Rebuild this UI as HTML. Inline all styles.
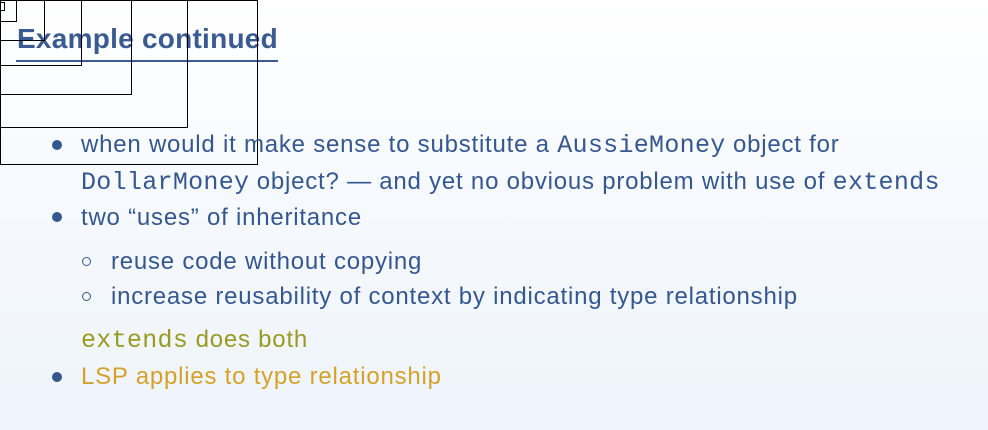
<!DOCTYPE html>
<html><head><meta charset="utf-8"><style>
html,body{margin:0;padding:0}
body{width:988px;height:430px;overflow:hidden;position:relative;background:linear-gradient(#ffffff,#f7fafe 40%,#eef4fb);font-family:"Liberation Sans",sans-serif;color:#35578f}
.r{position:absolute;left:0;top:0;border:1px solid #000;box-sizing:border-box}
.t{position:absolute;white-space:nowrap;font-size:24px;letter-spacing:0.78px;line-height:30px}
tt{font-family:"Liberation Mono",monospace;font-size:25px;letter-spacing:0.3px}
.b{position:absolute;width:10px;height:10px;border-radius:50%;background:#35578f}
.c{position:absolute;width:9px;height:9px;border-radius:50%;border:1.5px solid #35578f;box-sizing:border-box}
</style></head><body>
<div class="t" style="left:17px;top:24px;font-size:28px;letter-spacing:0.25px;font-weight:bold;color:#3a5b92">Example continued</div>
<div style="position:absolute;left:16px;top:60px;width:262px;height:2px;background:#3a5b92"></div>
<div class="r" style="width:5px;height:9px;top:2px"></div>
<div class="r" style="width:17px;height:22px"></div>
<div class="r" style="width:45px;height:41px"></div>
<div class="r" style="width:82px;height:66px"></div>
<div class="r" style="width:132px;height:95px"></div>
<div class="r" style="width:188px;height:128px"></div>
<div class="r" style="width:258px;height:165px"></div>
<div class="b" style="left:52px;top:140px"></div>
<div class="t" style="left:81px;top:130px">when would it make sense to substitute a <tt>AussieMoney</tt> object for</div>
<div class="t" style="left:81px;top:167px"><tt>DollarMoney</tt> object? — and yet no obvious problem with use of <tt>extends</tt></div>
<div class="b" style="left:52px;top:212px"></div>
<div class="t" style="left:81px;top:203px">two “uses” of inheritance</div>
<div class="c" style="left:82px;top:257px"></div>
<div class="t" style="left:111px;top:247px">reuse code without copying</div>
<div class="c" style="left:82px;top:292px"></div>
<div class="t" style="left:111px;top:282px">increase reusability of context by indicating type relationship</div>
<div class="t" style="left:81px;top:325px;color:#9a9a22"><tt>extends</tt> does both</div>
<div class="b" style="left:52px;top:372px"></div>
<div class="t" style="left:81px;top:362px;color:#d4a22a">LSP applies to type relationship</div>
</body></html>
